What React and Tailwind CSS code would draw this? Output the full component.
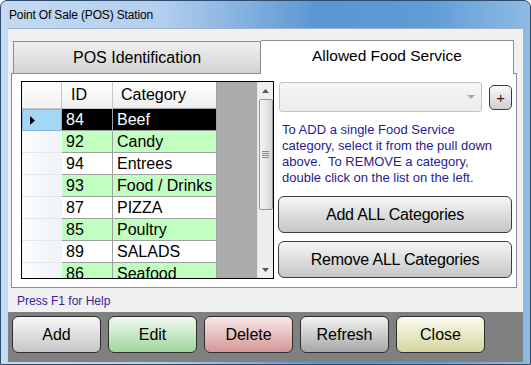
export default function App() {
  const rows = [
    { id: "84", name: "Beef", sel: true },
    { id: "92", name: "Candy", green: true },
    { id: "94", name: "Entrees" },
    { id: "93", name: "Food / Drinks", green: true },
    { id: "87", name: "PIZZA" },
    { id: "85", name: "Poultry", green: true },
    { id: "89", name: "SALADS" },
    { id: "86", name: "Seafood", green: true },
  ];
  const bottomButtons = [
    { label: "Add", cls: "bg-linear-to-b from-[#f7f7f7] to-[#c6c6c6]" },
    { label: "Edit", cls: "bg-linear-to-b from-[#f0f9f0] to-[#9fd59f]" },
    { label: "Delete", cls: "bg-linear-to-b from-[#f9e8e8] to-[#d39797]" },
    { label: "Refresh", cls: "bg-linear-to-b from-[#f3f3f3] to-[#a6a6a6]" },
    { label: "Close", cls: "bg-linear-to-b from-[#fcfcf0] to-[#d5d59e]" },
  ];
  return (
    <div className="w-[531px] h-[365px] overflow-hidden flex flex-col border border-[#2f4b6e] rounded-t-[7px] bg-[linear-gradient(90deg,#c4daf2_0%,#b3cfee_30%,#5a96d2_60%,#5f9bd5_80%,#8fbbe5_100%)] font-['Liberation_Sans',Arial,sans-serif] text-black">
      {/* Title bar */}
      <div className="h-[27px] flex items-center pl-[8px] shrink-0">
        <span className="text-[12px] tracking-[-0.15px] leading-none pt-[1px]">Point Of Sale (POS) Station</span>
      </div>
      {/* Body */}
      <div className="flex-1 flex px-[7px] pb-[2px] min-h-0">
        <div className="flex-1 flex flex-col border-t border-[#9fb4cb]">
          <div className="h-[283px] bg-[#f0f0f0] flex flex-col">
            {/* Tab row */}
            <div className="flex items-end mt-[11px] h-[34px] -mb-px relative z-10">
              <div className="ml-[5px] w-[248px] h-[32px] mb-px border border-b-0 border-[#898c95] bg-linear-to-b from-[#f0f0f0] to-[#d3d3d3] flex items-center justify-center">
                <span className="text-[16px] leading-none">POS Identification</span>
              </div>
              <div className="w-[253px] h-[34px] border border-b-0 border-l-0 border-[#898c95] bg-white flex items-center justify-center pb-[3px]">
                <span className="text-[15.5px] leading-none">Allowed Food Service</span>
              </div>
            </div>
            {/* Panel */}
            <div className="ml-[3px] w-[506px] h-[215px] border border-[#898c95] bg-white flex">
              {/* Grid */}
              <div className="ml-[9px] mt-[7px] w-[253px] h-[198px] border border-black flex">
                <div className="flex-1 bg-[#ababab] flex flex-col overflow-hidden">
                  <div className="flex h-[27px] shrink-0">
                    <div className="w-[40px] border-r border-b border-[#c8c8c8] bg-linear-to-b from-white to-[#f0f0f0]" />
                    <div className="w-[51px] border-r border-b border-[#c8c8c8] bg-linear-to-b from-white to-[#eeeeee] flex items-center pl-[9px] text-[16px]">ID</div>
                    <div className="w-[104px] border-r border-b border-[#a0a0a0] bg-linear-to-b from-white to-[#eeeeee] flex items-center pl-[8px] text-[16px]">Category</div>
                  </div>
                  {rows.map((r) => (
                    <div key={r.id} className="flex h-[22px] shrink-0">
                      <div
                        className={
                          r.sel
                            ? "w-[40px] border border-[#7fb4e0] bg-[#a4d6f6] flex items-center pl-[7px]"
                            : "w-[40px] border-b border-[#e3e7ec] bg-linear-to-r from-[#fafcfe] to-[#f0f3f7]"
                        }
                      >
                        {r.sel && (
                          <svg width="5" height="9" viewBox="0 0 5 9">
                            <path d="M0 0 L5 4.5 L0 9 Z" fill="#000" />
                          </svg>
                        )}
                      </div>
                      <div
                        className={
                          "w-[51px] border-r border-b border-[#a0a0a0] flex items-center pl-[4px] text-[16px] " +
                          (r.sel ? "bg-black text-white" : r.green ? "bg-[#c0ffc0]" : "bg-white")
                        }
                      >
                        {r.id}
                      </div>
                      <div
                        className={
                          "w-[104px] border-r border-b border-[#a0a0a0] flex items-center pl-[4px] text-[16px] whitespace-nowrap " +
                          (r.sel ? "bg-black text-white" : r.green ? "bg-[#c0ffc0]" : "bg-white")
                        }
                      >
                        {r.name}
                      </div>
                    </div>
                  ))}
                </div>
                {/* Scrollbar */}
                <div className="w-[16px] bg-[#eeeeee] border-l border-[#e4e4e4] flex flex-col items-center">
                  <div className="h-[17px] flex items-center justify-center">
                    <svg width="7" height="4" viewBox="0 0 7 4">
                      <path d="M0 4 L3.5 0 L7 4 Z" fill="#555" />
                    </svg>
                  </div>
                  <div className="w-[14px] h-[111px] rounded-[2px] border border-[#989898] bg-linear-to-r from-[#f4f4f4] via-[#e8e8e8] to-[#d6d6d6] flex flex-col items-center justify-center gap-[1px]">
                    <div className="w-[7px] h-px bg-[#8a8a8a]" />
                    <div className="w-[7px] h-px bg-[#8a8a8a]" />
                    <div className="w-[7px] h-px bg-[#8a8a8a]" />
                    <div className="w-[7px] h-px bg-[#8a8a8a]" />
                  </div>
                  <div className="flex-1" />
                  <div className="h-[17px] flex items-center justify-center">
                    <svg width="7" height="4" viewBox="0 0 7 4">
                      <path d="M0 0 L3.5 4 L7 0 Z" fill="#555" />
                    </svg>
                  </div>
                </div>
              </div>
              {/* Right column */}
              <div className="ml-[4px] w-[234px] flex flex-col">
                <div className="mt-[8px] flex items-center h-[30px]">
                  <div className="ml-[1px] w-[204px] h-[30px] rounded-[3px] border border-[#c3c3c3] bg-linear-to-b from-[#f6f6f6] to-[#ececec] flex items-center justify-end pr-[6px]">
                    <svg width="8" height="4" viewBox="0 0 8 4">
                      <path d="M0 0 L4 4 L8 0 Z" fill="#a8a8a8" />
                    </svg>
                  </div>
                  <div className="ml-[7px] w-[23px] h-[25px] rounded-[5px] border border-[#3a3a3a] bg-linear-to-b from-[#fafafa] to-[#cfcfcf] flex items-center justify-center text-[15px] text-[#5c0b0b] leading-none">
                    +
                  </div>
                </div>
                <div className="mt-[10px] ml-[4px] text-[13px] leading-[16px] text-[#2a1c92] whitespace-nowrap">
                  To ADD a single Food Service
                  <br />
                  category, select it from the pull down
                  <br />
                  above.&nbsp; To REMOVE a category,
                  <br />
                  double click on the list on the left.
                </div>
                <div className="mt-[10px] h-[37px] rounded-[6px] border border-[#3c3c3c] bg-linear-to-b from-[#f6f6f6] to-[#c6c6c6] flex items-center justify-center text-[16px] tracking-[-0.2px]">
                  Add ALL Categories
                </div>
                <div className="mt-[8px] h-[37px] rounded-[6px] border border-[#3c3c3c] bg-linear-to-b from-[#f6f6f6] to-[#c6c6c6] flex items-center justify-center text-[16px] tracking-[-0.2px]">
                  Remove ALL Categories
                </div>
              </div>
            </div>
            {/* Help text */}
            <div className="flex-1 flex items-center pl-[9px] pt-[1px]">
              <span className="text-[12px] text-[#3a1c9c] leading-none">Press F1 for Help</span>
            </div>
          </div>
          {/* Button band */}
          <div className="flex-1 bg-[#808080] flex gap-[7px] pl-[4px] pt-[4px]">
            {bottomButtons.map((b) => (
              <div
                key={b.label}
                className={"w-[89px] h-[37px] rounded-[6px] border border-[#2e2e2e] flex items-center justify-center text-[16px] " + b.cls}
              >
                {b.label}
              </div>
            ))}
          </div>
        </div>
      </div>
    </div>
  );
}
